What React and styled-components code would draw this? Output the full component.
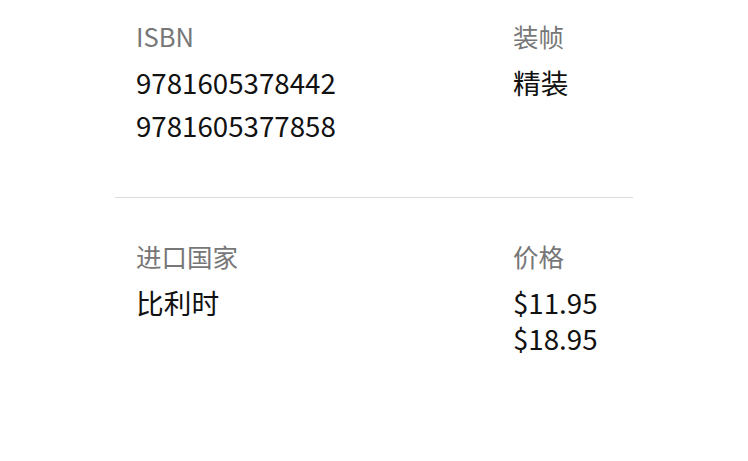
import React from 'react';
import styled, { createGlobalStyle } from 'styled-components';

const GlobalStyle = createGlobalStyle`
  body {
    margin: 0;
    background: #fff;
    font-family: "Noto Sans CJK SC", "Noto Sans", sans-serif;
  }
`;

const Card = styled.div`
  width: 518px;
  margin: 0 auto;
`;

const Section = styled.section`
  display: grid;
  grid-template-columns: 377px 1fr;
  padding: ${({ top }) => top}px 0 ${({ bottom }) => bottom}px 21px;
`;

const Divider = styled.hr`
  margin: 0;
  border: none;
  border-top: 1px solid #dcdcdc;
`;

const Field = styled.div`
  display: flex;
  flex-direction: column;
`;

const Label = styled.div`
  font-size: 25.5px;
  line-height: 36px;
  color: #777;
`;

const Value = styled.div`
  margin-top: ${({ lh }) => (lh > 36 ? 6.5 : 10)}px;
  font-size: 27.7px;
  line-height: ${({ lh }) => lh}px;
  color: #111;
`;

const fields = [
  [
    { label: 'ISBN', values: ['9781605378442', '9781605377858'], lh: 43 },
    { label: '装帧', values: ['精装'], lh: 36 },
  ],
  [
    { label: '进口国家', values: ['比利时'], lh: 36 },
    { label: '价格', values: ['$11.95', '$18.95'], lh: 36 },
  ],
];

function Row({ items, top, bottom }) {
  return (
    <Section top={top} bottom={bottom}>
      {items.map((f) => (
        <Field key={f.label}>
          <Label>{f.label}</Label>
          <Value lh={f.lh}>
            {f.values.map((v, i) => (
              <React.Fragment key={v}>
                {i > 0 && <br />}
                {v}
              </React.Fragment>
            ))}
          </Value>
        </Field>
      ))}
    </Section>
  );
}

export default function App() {
  return (
    <>
      <GlobalStyle />
      <Card>
        <Row items={fields[0]} top={18} bottom={50} />
        <Divider />
        <Row items={fields[1]} top={40} bottom={40} />
      </Card>
    </>
  );
}
